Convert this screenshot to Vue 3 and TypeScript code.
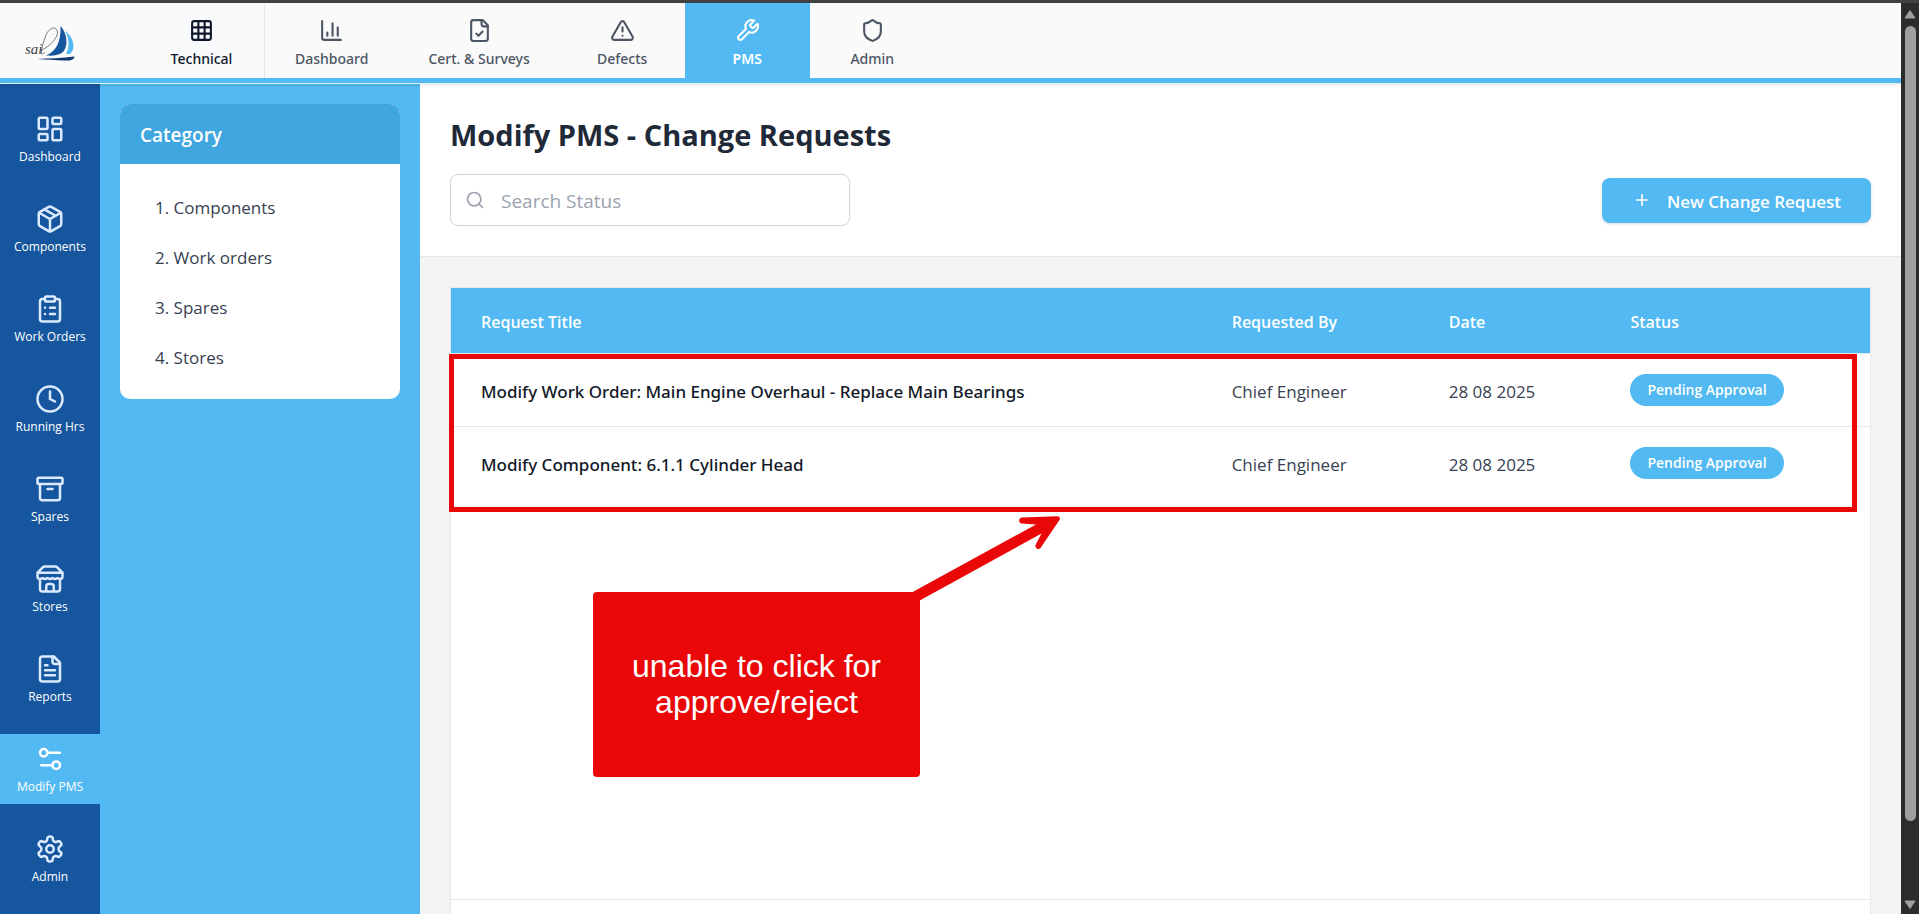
<script setup lang="ts">
import { ref } from 'vue'

interface NavItem {
  label: string
  icon: string
  active?: boolean
}

const icons: Record<string, string> = {
  grid: '<rect width="18" height="18" x="3" y="3" rx="2"/><path d="M3 9h18M3 15h18M9 3v18M15 3v18"/>',
  chart: '<path d="M3 3v16a2 2 0 0 0 2 2h16M18 17V9M13 17V5M8 17v-3"/>',
  fileCheck: '<path d="M15 2H6a2 2 0 0 0-2 2v16a2 2 0 0 0 2 2h12a2 2 0 0 0 2-2V7z"/><path d="M14 2v4a2 2 0 0 0 2 2h4M9 15l2 2 4-4"/>',
  alert: '<path d="m21.73 18-8-14a2 2 0 0 0-3.48 0l-8 14A2 2 0 0 0 4 21h16a2 2 0 0 0 1.73-3M12 9v4M12 17h.01"/>',
  wrench: '<path d="M14.7 6.3a1 1 0 0 0 0 1.4l1.6 1.6a1 1 0 0 0 1.4 0l3.77-3.77a6 6 0 0 1-7.94 7.94l-6.91 6.91a2.12 2.12 0 0 1-3-3l6.91-6.91a6 6 0 0 1 7.94-7.94l-3.76 3.76z"/>',
  shield: '<path d="M20 13c0 5-3.5 7.5-7.66 8.95a1 1 0 0 1-.67-.01C7.5 20.5 4 18 4 13V6a1 1 0 0 1 1-1c2 0 4.5-1.2 6.24-2.72a1.17 1.17 0 0 1 1.52 0C14.51 3.81 17 5 19 5a1 1 0 0 1 1 1z"/>',
  dashboard: '<rect width="7" height="9" x="3" y="3" rx="1"/><rect width="7" height="5" x="14" y="3" rx="1"/><rect width="7" height="9" x="14" y="12" rx="1"/><rect width="7" height="5" x="3" y="16" rx="1"/>',
  box: '<path d="M11 21.73a2 2 0 0 0 2 0l7-4A2 2 0 0 0 21 16V8a2 2 0 0 0-1-1.73l-7-4a2 2 0 0 0-2 0l-7 4A2 2 0 0 0 3 8v8a2 2 0 0 0 1 1.73zM12 22V12"/><path d="M3.29 7 12 12l8.71-5M7.5 4.27l9 5.15"/>',
  clipboard: '<rect width="8" height="4" x="8" y="2" rx="1"/><path d="M16 4h2a2 2 0 0 1 2 2v14a2 2 0 0 1-2 2H6a2 2 0 0 1-2-2V6a2 2 0 0 1 2-2h2M12 11h4M12 16h4M8 11h.01M8 16h.01"/>',
  clock: '<circle cx="12" cy="12" r="10"/><path d="M12 6v6l4 2"/>',
  archive: '<rect width="20" height="5" x="2" y="3" rx="1"/><path d="M4 8v11a2 2 0 0 0 2 2h12a2 2 0 0 0 2-2V8M10 12h4"/>',
  store: '<path d="m2 7 4.41-4.41A2 2 0 0 1 7.83 2h8.34a2 2 0 0 1 1.42.59L22 7M4 12v8a2 2 0 0 0 2 2h12a2 2 0 0 0 2-2v-8M15 22v-4a2 2 0 0 0-2-2h-2a2 2 0 0 0-2 2v4M2 7h20M22 7v3a2 2 0 0 1-2 2 2.7 2.7 0 0 1-1.59-.63.7.7 0 0 0-.82 0A2.7 2.7 0 0 1 16 12a2.7 2.7 0 0 1-1.59-.63.7.7 0 0 0-.82 0A2.7 2.7 0 0 1 12 12a2.7 2.7 0 0 1-1.59-.63.7.7 0 0 0-.82 0A2.7 2.7 0 0 1 8 12a2.7 2.7 0 0 1-1.59-.63.7.7 0 0 0-.82 0A2.7 2.7 0 0 1 4 12a2 2 0 0 1-2-2V7"/>',
  file: '<path d="M15 2H6a2 2 0 0 0-2 2v16a2 2 0 0 0 2 2h12a2 2 0 0 0 2-2V7z"/><path d="M14 2v4a2 2 0 0 0 2 2h4M10 9H8M16 13H8M16 17H8"/>',
  settings2: '<path d="M20 7h-9M14 17H5"/><circle cx="17" cy="17" r="3"/><circle cx="7" cy="7" r="3"/>',
  gear: '<path d="M12.22 2h-.44a2 2 0 0 0-2 2v.18a2 2 0 0 1-1 1.73l-.43.25a2 2 0 0 1-2 0l-.15-.08a2 2 0 0 0-2.73.73l-.22.38a2 2 0 0 0 .73 2.73l.15.1a2 2 0 0 1 1 1.72v.51a2 2 0 0 1-1 1.74l-.15.09a2 2 0 0 0-.73 2.73l.22.38a2 2 0 0 0 2.73.73l.15-.08a2 2 0 0 1 2 0l.43.25a2 2 0 0 1 1 1.73V20a2 2 0 0 0 2 2h.44a2 2 0 0 0 2-2v-.18a2 2 0 0 1 1-1.73l.43-.25a2 2 0 0 1 2 0l.15.08a2 2 0 0 0 2.73-.73l.22-.39a2 2 0 0 0-.73-2.73l-.15-.08a2 2 0 0 1-1-1.74v-.5a2 2 0 0 1 1-1.74l.15-.09a2 2 0 0 0 .73-2.73l-.22-.38a2 2 0 0 0-2.73-.73l-.15.08a2 2 0 0 1-2 0l-.43-.25a2 2 0 0 1-1-1.73V4a2 2 0 0 0-2-2z"/><circle cx="12" cy="12" r="3"/>',
}

const tabs: NavItem[] = [
  { label: 'Dashboard', icon: 'chart' },
  { label: 'Cert. & Surveys', icon: 'fileCheck' },
  { label: 'Defects', icon: 'alert' },
  { label: 'PMS', icon: 'wrench', active: true },
  { label: 'Admin', icon: 'shield' },
]

const rail: NavItem[] = [
  { label: 'Dashboard', icon: 'dashboard' },
  { label: 'Components', icon: 'box' },
  { label: 'Work Orders', icon: 'clipboard' },
  { label: 'Running Hrs', icon: 'clock' },
  { label: 'Spares', icon: 'archive' },
  { label: 'Stores', icon: 'store' },
  { label: 'Reports', icon: 'file' },
  { label: 'Modify PMS', icon: 'settings2', active: true },
  { label: 'Admin', icon: 'gear' },
]

const categories: string[] = ['1. Components', '2. Work orders', '3. Spares', '4. Stores']

const requests = [
  { title: 'Modify Work Order: Main Engine Overhaul - Replace Main Bearings', by: 'Chief Engineer', date: '28 08 2025', status: 'Pending Approval' },
  { title: 'Modify Component: 6.1.1 Cylinder Head', by: 'Chief Engineer', date: '28 08 2025', status: 'Pending Approval' },
]

const search = ref('')
</script>

<template>
  <div class="window">
    <div class="page">
      <header class="topbar">
        <a class="logo" href="#" aria-label="sail">
          <svg viewBox="0 0 60 46" width="60" height="46">
            <path d="M40.500 6C48 14 48 27 43 32C39 35.500 33 36 26 35.500C36 31 41 23 40.500 6Z" fill="#16569e" />
            <path d="M45.500 11C54 18 56 29 50 34H46C50 27 49 19 45.500 11Z" fill="#52b9f2" />
            <path d="M17 39C30 38.500 42 38 54.500 36.500C54 40 50 41 44 40.500C36 40 28 39.500 17 39Z" fill="#0f3672" />
            <path d="M20 31C29 27 38 18 37.500 12C36 5 29 8 26 15C24 20 21 29 21.500 33C22 35 23.500 34 24.500 32" fill="none" stroke="#444" stroke-width="0.700" />
            <text x="5" y="34">sai</text>
          </svg>
        </a>
        <nav class="tabs" aria-label="Modules">
          <a class="tab module" href="#">
            <svg class="icon-tab" viewBox="0 0 24 24" v-html="icons.grid"></svg>
            <span>Technical</span>
          </a>
          <a v-for="t in tabs" :key="t.label" class="tab" :class="{ active: t.active }" href="#">
            <svg class="icon-tab" viewBox="0 0 24 24" v-html="icons[t.icon]"></svg>
            <span>{{ t.label }}</span>
          </a>
        </nav>
      </header>

      <div class="body">
        <nav class="rail" aria-label="PMS sections">
          <a v-for="r in rail" :key="r.label" class="rail-item" :class="{ active: r.active }" href="#">
            <svg class="icon-rail" viewBox="0 0 24 24" v-html="icons[r.icon]"></svg>
            <span>{{ r.label }}</span>
          </a>
        </nav>

        <aside class="side">
          <section class="category">
            <h2>Category</h2>
            <ul>
              <li v-for="c in categories" :key="c"><button type="button">{{ c }}</button></li>
            </ul>
          </section>
        </aside>

        <main class="main">
          <div class="head">
            <h1>Modify PMS - Change Requests</h1>
            <div class="tools">
              <label class="search">
                <svg viewBox="0 0 24 24" aria-hidden="true"><circle cx="11" cy="11" r="8" /><path d="m21 21-4.300-4.300" /></svg>
                <input v-model="search" type="text" placeholder="Search Status" aria-label="Search Status" />
              </label>
              <button class="new" type="button">
                <svg viewBox="0 0 24 24" aria-hidden="true"><path d="M5 12h14M12 5v14" /></svg>
                <span>New Change Request</span>
              </button>
            </div>
          </div>

          <div class="content">
            <div class="card">
              <table>
                <thead>
                  <tr>
                    <th class="c-title">Request Title</th>
                    <th class="c-by">Requested By</th>
                    <th class="c-date">Date</th>
                    <th class="c-status">Status</th>
                  </tr>
                </thead>
                <tbody>
                  <tr v-for="q in requests" :key="q.title">
                    <td class="title">{{ q.title }}</td>
                    <td>{{ q.by }}</td>
                    <td>{{ q.date }}</td>
                    <td class="status"><span class="pill">{{ q.status }}</span></td>
                  </tr>
                </tbody>
              </table>
              <div class="card-foot"></div>

              <div class="mark-frame"></div>
              <svg class="mark-arrow" viewBox="0 0 160 100" width="160" height="100" aria-hidden="true">
                <path d="M5 89L132 19.500L118 18.500A3 3 0 0 1 118.500 12.500L153 11.200A2.500 2.500 0 0 1 155.500 15L136.500 43A3 3 0 0 1 131.500 40L137.500 28.500L13 97Z" />
              </svg>
              <div class="mark-note">unable to click for approve/reject</div>
            </div>
          </div>
        </main>
      </div>
    </div>

    <div class="scrollbar" aria-hidden="true">
      <svg viewBox="0 0 14 10"><path d="M7 1.500 12 9H2Z" /></svg>
      <div class="thumb"></div>
      <svg viewBox="0 0 14 10"><path d="M7 8.500 12 1H2Z" /></svg>
    </div>
  </div>
</template>

<style>
body {
  margin: 0;
  background: #fff;
}
</style>

<style scoped>
* {
  box-sizing: border-box;
}

.window {
  display: flex;
  height: 100vh;
  border-top: 3px solid #414141;
  overflow: hidden;
  font-family: "Open Sans", "Noto Sans", sans-serif;
  font-size: 16px;
  color: #374151;
}

a {
  color: inherit;
  text-decoration: none;
}

button,
input {
  font: inherit;
}

svg {
  display: block;
  flex: none;
}

.page {
  flex: 1;
  min-width: 0;
  display: flex;
  flex-direction: column;
}

/* Top bar */
.topbar {
  position: relative;
  display: flex;
  background: #fafafa;
  border-bottom: 5px solid #52b9f2;
  box-shadow: 0 1px 0 #e4eef5, 0 2px 4px rgba(0, 0, 0, 0.1);
}

.logo {
  width: 139px;
  padding: 17px 20px 0;
}

.logo text {
  font: italic 15px "Liberation Serif", serif;
  fill: #444;
}

.tabs {
  display: flex;
}

.tab {
  display: flex;
  flex-direction: column;
  align-items: center;
  gap: 6px;
  min-width: 125px;
  padding: 15px 30px 9px;
  font-family: "Noto Sans", "Open Sans", sans-serif;
  font-size: 14px;
  font-weight: 500;
  line-height: 20px;
  color: #4b5563;
}

.tab.module {
  width: 126px;
  background: #f8fafc;
  border-right: 1px solid #e5e7eb;
  color: #0f172a;
}

.tab.active {
  background: #52b9f2;
  color: #fff;
  font-weight: 600;
}

.icon-tab,
.icon-rail,
.search svg,
.new svg {
  fill: none;
  stroke: currentColor;
  stroke-width: 2;
  stroke-linecap: round;
  stroke-linejoin: round;
}

.icon-tab {
  width: 25px;
  height: 25px;
}

.body {
  flex: 1;
  min-height: 0;
  display: flex;
  padding-top: 1px;
}

/* Left rail */
.rail {
  width: 100px;
  flex: none;
  display: flex;
  flex-direction: column;
  gap: 20px;
  padding-top: 20px;
  background: #16569e;
  color: #fff;
}

.rail-item {
  display: flex;
  flex-direction: column;
  align-items: center;
  gap: 5px;
  height: 70px;
  padding-top: 10px;
  font-size: 12px;
  line-height: 16px;
  white-space: nowrap;
}

.rail-item.active {
  background: #52b9f2;
}

.icon-rail {
  width: 30px;
  height: 30px;
  color: #dbeafe;
}

.active .icon-rail {
  color: #fff;
}

/* Category panel */
.side {
  width: 320px;
  flex: none;
  padding: 20px;
  background: #52b9f2;
}

.category {
  border-radius: 10px;
  background: #fff;
  overflow: hidden;
}

.category h2 {
  margin: 0;
  padding: 16px 20px 14px;
  background: #40a6e0;
  color: #fff;
  font-size: 19px;
  font-weight: 600;
  line-height: 30px;
}

.category ul {
  margin: 0;
  padding: 20px;
  list-style: none;
  display: flex;
  flex-direction: column;
  gap: 5px;
}

.category button {
  width: 100%;
  padding: 11px 15px 9px;
  border: 0;
  background: none;
  color: #374151;
  font-size: 17px;
  line-height: 25px;
  text-align: left;
}

/* Main area */
.main {
  flex: 1;
  min-width: 0;
  display: flex;
  flex-direction: column;
  background: #f3f4f6;
}

.head {
  padding: 30px;
  background: #fff;
  border-bottom: 1px solid #e5e7eb;
}

h1 {
  margin: 0 0 18px;
  color: #1f2937;
  font-size: 29px;
  font-weight: 700;
  line-height: 42px;
}

.tools {
  display: flex;
  align-items: center;
  justify-content: space-between;
}

.search {
  display: flex;
  align-items: center;
  gap: 16px;
  width: 400px;
  height: 52px;
  padding: 0 14px;
  border: 1px solid #d1d5db;
  border-radius: 8px;
  color: #9ca3af;
}

.search svg {
  width: 20px;
  height: 20px;
}

.search input {
  flex: 1;
  min-width: 0;
  padding: 1px 0 0;
  border: 0;
  outline: 0;
  background: none;
  color: #374151;
  font-size: 19px;
}

.search input::placeholder {
  color: #9ca3af;
}

.new {
  display: flex;
  align-items: center;
  gap: 15px;
  height: 45px;
  padding: 0 30px;
  border: 0;
  border-radius: 8px;
  background: #52b9f2;
  color: #fff;
  font-size: 17px;
  font-weight: 600;
  box-shadow: 0 1px 3px rgba(0, 0, 0, 0.15);
}

.new span {
  padding-top: 2px;
}

.new svg {
  width: 20px;
  height: 20px;
  stroke-width: 2;
  stroke-linecap: butt;
}

.content {
  flex: 1;
  display: flex;
  padding: 30px 30px 0;
}

.card {
  position: relative;
  flex: 1;
  display: flex;
  flex-direction: column;
  justify-content: space-between;
  border: 1px solid #e5e7eb;
  border-bottom: 0;
  background: #fff;
}

table {
  width: 100%;
  table-layout: fixed;
  border-spacing: 0;
  text-align: left;
}

th,
td {
  padding: 2px 30px 0;
  border-bottom: 1px solid #e5e7eb;
  white-space: nowrap;
}

th {
  height: 66px;
  background: #52b9f2;
  background-clip: padding-box;
  color: #fff;
  font-size: 16px;
  font-weight: 600;
}

.c-title {
  width: 52.9%;
}

.c-by {
  width: 15.3%;
}

.c-date {
  width: 12.8%;
}

.c-status {
  width: 19%;
}

td {
  height: 73px;
  color: #374151;
  font-size: 17px;
}

tbody tr:last-child td {
  border-bottom-color: transparent;
}

td.title {
  color: #111827;
  font-family: "Noto Sans", "Open Sans", sans-serif;
  font-weight: 500;
}

td.status {
  padding-top: 0;
}

.pill {
  display: block;
  width: fit-content;
  padding: 6px 17px;
  border-radius: 16px;
  background: #52b9f2;
  color: #fff;
  font-size: 14px;
  font-weight: 600;
  line-height: 20px;
}

.card-foot {
  height: 15px;
  border-top: 1px solid #e5e7eb;
}

/* Review annotations laid over the table */
.mark-frame {
  position: absolute;
  top: 66px;
  left: -2px;
  right: 13px;
  height: 158px;
  border: 5px solid #e90707;
}

.mark-arrow {
  position: absolute;
  top: 217px;
  left: 453px;
  fill: #e90707;
}

.mark-note {
  position: absolute;
  top: 304px;
  left: 142px;
  display: grid;
  place-items: center;
  width: 327px;
  height: 185px;
  padding: 0 35px 2px;
  border-radius: 4px;
  background: #e90707;
  color: #fff;
  font-family: "Liberation Sans", Arial, sans-serif;
  font-size: 32px;
  line-height: 36px;
  text-align: center;
}

/* Window scrollbar */
.scrollbar {
  width: 18px;
  flex: none;
  display: flex;
  flex-direction: column;
  align-items: center;
  padding: 6px 0 4px;
  background: #2c2c2c;
}

.scrollbar svg {
  width: 14px;
  height: 10px;
  fill: #9f9f9f;
  stroke: #9f9f9f;
  stroke-linejoin: round;
}

.thumb {
  flex: 1;
  width: 11px;
  margin: 7px 0 79px;
  border-radius: 6px;
  background: #9f9f9f;
}
</style>
